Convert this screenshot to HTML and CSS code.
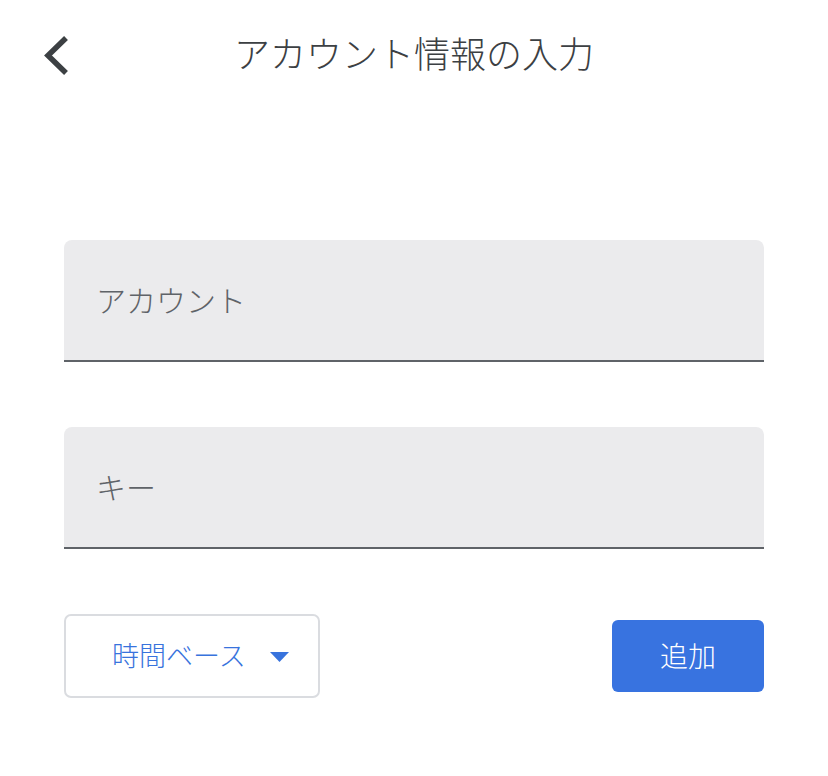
FILE: index.html
```html
<!DOCTYPE html>
<html lang="ja">
<head>
<meta charset="utf-8">
<title>アカウント情報の入力</title>
<link rel="stylesheet" href="styles.css">
</head>
<body>
<header class="header">
  <button class="back" aria-label="戻る">
    <svg width="30" height="44" viewBox="0 0 30 44"><polyline points="24,5 6,22.5 24,40" fill="none" stroke="#3c4043" stroke-width="5.5" stroke-linejoin="miter" stroke-linecap="butt"/></svg>
  </button>
  <h1 class="title">アカウント情報の入力</h1>
  <div></div>
</header>
<main class="form">
  <label class="field"><input class="field-input" type="text" placeholder="アカウント"></label>
  <label class="field"><input class="field-input" type="text" placeholder="キー"></label>
  <div class="actions">
    <button class="select">
      <span class="select-label">時間ベース</span>
      <svg class="caret" width="19" height="10" viewBox="0 0 19 10"><polygon points="0,0 19,0 9.5,10" fill="#3873dd"/></svg>
    </button>
    <button class="add">追加</button>
  </div>
</main>
</body>
</html>
```
FILE: styles.css
```css
* { box-sizing: border-box; }
html, body { margin: 0; background: #fff; }
body {
  font-family: "Noto Sans CJK JP", "Noto Sans", sans-serif;
  color: #3c4043;
}
.header {
  height: 106px;
  display: grid;
  grid-template-columns: 1fr auto 1fr;
  align-items: center;
}
.back {
  justify-self: start;
  margin-left: 42px;
  padding: 0;
  border: 0;
  background: none;
  display: flex;
  margin-top: 4px;
}
.title {
  margin: 0 0 3px;
  font-size: 36px;
  font-weight: 300;
  line-height: 1;
  color: #3c4043;
}
.form {
  padding: 134px 64px 0;
  display: flex;
  flex-direction: column;
}
.field {
  display: block;
  height: 122px;
  background: #ebebed;
  border-radius: 8px 8px 0 0;
  border-bottom: 2px solid #5f6368;
}
.field + .field { margin-top: 65px; }
.field-input {
  width: 100%;
  height: 100%;
  border: 0;
  outline: none;
  background: transparent;
  padding: 0 0 2px 32px;
  font-family: inherit;
  font-size: 30px;
  font-weight: 300;
  color: #3c4043;
}
.field-input::placeholder { color: #5f6368; opacity: 1; }
.actions {
  margin-top: 65px;
  display: flex;
  justify-content: space-between;
  align-items: center;
}
.select {
  width: 256px;
  height: 84px;
  border: 2px solid #dadce0;
  border-radius: 7px;
  background: #fff;
  display: flex;
  align-items: center;
  padding: 0 0 0 46px;
  font-family: inherit;
}
.select-label {
  font-size: 27px;
  font-weight: 300;
  color: #3873dd;
  line-height: 1;
  margin-bottom: 4px;
}
.caret { margin-left: 24px; margin-top: 2px; }
.add {
  width: 152px;
  height: 72px;
  border: 0;
  border-radius: 6px;
  background: #3873e0;
  color: #fff;
  font-family: inherit;
  font-size: 28px;
  font-weight: 300;
  padding: 0 0 3px;
  line-height: 1;
}
```
